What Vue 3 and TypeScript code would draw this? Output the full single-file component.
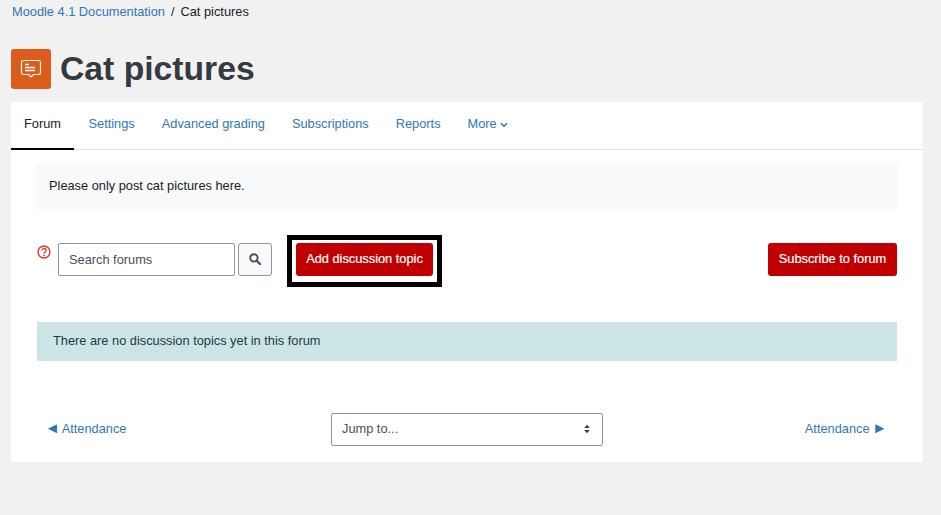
<template>
  <div class="page">
    <nav class="crumbs">
      <a href="#">Moodle 4.1 Documentation</a>
      <span class="sep">/</span>
      <span>Cat pictures</span>
    </nav>

    <header class="title-row">
      <div class="forum-icon">
        <svg width="24" height="24" viewBox="0 0 24 24" fill="none" stroke="#fff">
          <path d="M4.500 3.500h15a2 2 0 0 1 2 2v10a2 2 0 0 1-2 2h-5L12 20l-2.500-2.500h-5a2 2 0 0 1-2-2v-10a2 2 0 0 1 2-2z" stroke-width="1.200" />
          <path d="M6 7.500h4M6 10.500h10M6 13.500h10" stroke-width="1.500" />
        </svg>
      </div>
      <h1>Cat pictures</h1>
    </header>

    <main class="card">
      <ul class="tabs">
        <li v-for="tab in tabs" :key="tab" class="tab" :class="{ active: tab === 'Forum' }">{{ tab }}</li>
        <li class="tab">
          More
          <svg class="caret" width="8" height="6" viewBox="0 0 8 6" fill="none" stroke="#2f77b5" stroke-width="1.600">
            <path d="M1 1.200l3 3 3-3" />
          </svg>
        </li>
      </ul>

      <div class="content">
        <div class="intro">Please only post cat pictures here.</div>

        <div class="actions">
          <svg class="help" width="14" height="14" viewBox="0 0 14 14" fill="none">
            <circle cx="7" cy="7" r="6" stroke="#e02b2b" stroke-width="1.300" />
            <path d="M5 5.400a2 2 0 1 1 3.100 1.700c-.7.4-1.100.8-1.100 1.500" stroke="#e02b2b" stroke-width="1.300" />
            <circle cx="7" cy="10.400" r=".8" fill="#e02b2b" />
          </svg>
          <div class="search-input">Search forums</div>
          <button class="search-btn">
            <svg width="12" height="12" viewBox="0 0 14 14" fill="none" stroke="#495057">
              <circle cx="5.700" cy="5.700" r="4.300" stroke-width="2.200" />
              <path d="M8.800 8.800l4 4" stroke-width="2.600" stroke-linecap="round" />
            </svg>
          </button>
          <div class="focus-ring">
            <button class="red-btn">Add discussion topic</button>
          </div>
          <button class="red-btn subscribe">Subscribe to forum</button>
        </div>

        <div class="notice">There are no discussion topics yet in this forum</div>

        <div class="activity-nav">
          <a href="#" class="prev"><span class="arrow">◄</span> Attendance</a>
          <div class="jump">
            <span>Jump to...</span>
            <svg width="6" height="10" viewBox="0 0 6 10" fill="#343a40">
              <path d="M3 .8L5.800 4H.2zM3 9.200L.2 6h5.600z" />
            </svg>
          </div>
          <a href="#" class="next">Attendance <span class="arrow">►</span></a>
        </div>
      </div>
    </main>
  </div>
</template>

<script setup lang="ts">
const tabs: string[] = ['Forum', 'Settings', 'Advanced grading', 'Subscriptions', 'Reports']
</script>

<style>
html,
body {
  background: #f1f1f1;
}
</style>

<style scoped>
.page {
  height: 515px;
  box-sizing: border-box;
  padding: 0 18px 0 11px;
  background: #f1f1f1;
  font-family: "Liberation Sans", Arial, sans-serif;
  font-size: 12.800px;
  line-height: 20px;
  color: #1d2125;
  overflow: hidden;
}

a {
  color: #2f77b5;
  text-decoration: none;
}

.crumbs {
  display: flex;
  gap: 6px;
  padding: 2px 0 0 1px;
  height: 49px;
  box-sizing: border-box;
}

.title-row {
  display: flex;
  align-items: center;
  gap: 9px;
  height: 40px;
  margin-bottom: 13px;
}

.forum-icon {
  width: 40px;
  height: 40px;
  border-radius: 3px;
  background: #dc5c1b;
  display: flex;
  align-items: center;
  justify-content: center;
}

h1 {
  margin: 0 0 2px;
  font-size: 33.700px;
  font-weight: 700;
  line-height: 38px;
  color: #343a40;
}

.card {
  height: 360px;
  background: #fff;
}

.tabs {
  display: flex;
  list-style: none;
  margin: 0;
  padding: 0;
  height: 47px;
  border-bottom: 1px solid #dee2e6;
}

.tab {
  padding: 0 12.500px 0 14.500px;
  line-height: 43px;
  color: #2f77b5;
  height: 48px;
  box-sizing: border-box;
}

.tab.active {
  padding: 0 13px;
  color: #1d2125;
  border-bottom: 2px solid #000;
}

.caret {
  margin-left: 0;
  vertical-align: 0;
}

.content {
  padding: 13px 25px 0 25px;
}

.intro {
  height: 46px;
  padding: 13px;
  box-sizing: border-box;
  background: #f8f9fa;
}

.actions {
  display: flex;
  align-items: flex-start;
  margin-top: 26px;
  height: 52px;
}

.help {
  margin: 10px 0 0 1px;
}

.search-input {
  width: 177px;
  height: 33px;
  margin: 8px 0 0 7px;
  padding: 6px 10px;
  box-sizing: border-box;
  border: 1px solid #8f959e;
  border-radius: 2px;
  color: #495057;
}

.search-btn {
  width: 34px;
  height: 33px;
  margin: 8px 0 0 3px;
  padding: 0 1px 2px 0;
  border: 1px solid #8f959e;
  border-radius: 3px;
  background: #f8f9fa;
  display: flex;
  align-items: center;
  justify-content: center;
}

.focus-ring {
  margin-left: 15px;
  padding-top: 3px;
  border: 5px solid #000;
  width: 155px;
  height: 52px;
  box-sizing: border-box;
  display: flex;
  align-items: flex-start;
  justify-content: center;
}

.red-btn {
  width: 137px;
  height: 33px;
  padding: 0 0 2px;
  border: 0;
  border-radius: 3px;
  background: #c00000;
  color: #fff;
  font-family: inherit;
  font-size: 12.800px;
  font-weight: 400;
  line-height: 20px;
  white-space: nowrap;
  -webkit-text-stroke: 0.2px #fff;
}

.subscribe {
  width: 129px;
  margin: 8px 1px 0 auto;
}

.notice {
  height: 39px;
  margin: 35px 1px 0;
  padding: 9px 16px;
  box-sizing: border-box;
  background: #cbe5e7;
  color: #1f3a3d;
}

.activity-nav {
  display: grid;
  grid-template-columns: 1fr 272px 1fr;
  align-items: center;
  margin-top: 52px;
}

.prev,
.next {
  padding-bottom: 2px;
  word-spacing: -1px;
}

.prev {
  padding-left: 9px;
}

.next {
  padding-right: 11px;
  text-align: right;
}

.arrow {
  font-size: 15px;
}

.jump {
  height: 33px;
  padding: 0 12px 2px 10px;
  box-sizing: border-box;
  border: 1px solid #8f959e;
  border-radius: 2px;
  display: flex;
  align-items: center;
  justify-content: space-between;
  color: #495057;
}
</style>
